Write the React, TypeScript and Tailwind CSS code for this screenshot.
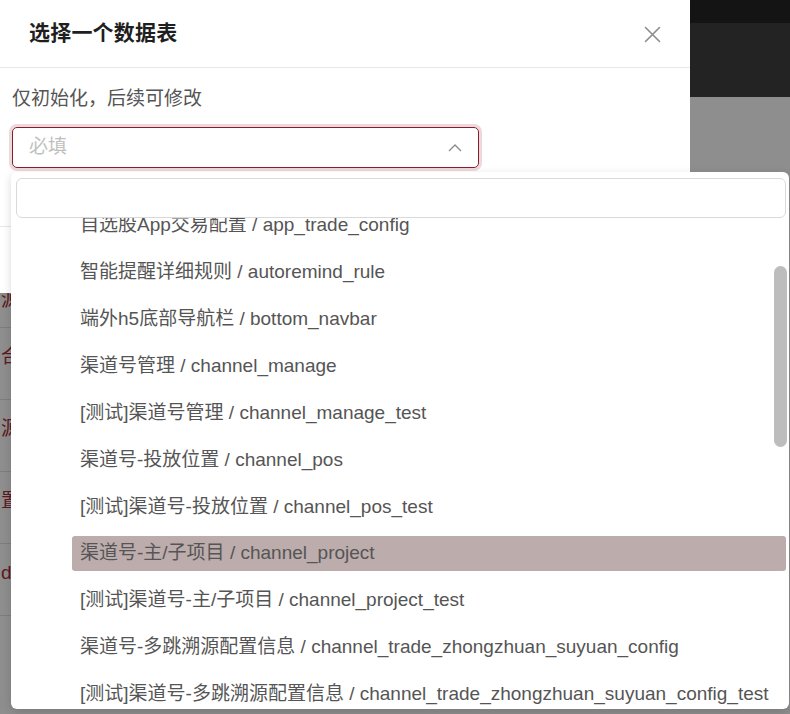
import React from "react";

const options = [
  "自选股App交易配置 / app_trade_config",
  "智能提醒详细规则 / autoremind_rule",
  "端外h5底部导航栏 / bottom_navbar",
  "渠道号管理 / channel_manage",
  "[测试]渠道号管理 / channel_manage_test",
  "渠道号-投放位置 / channel_pos",
  "[测试]渠道号-投放位置 / channel_pos_test",
  "渠道号-主/子项目 / channel_project",
  "[测试]渠道号-主/子项目 / channel_project_test",
  "渠道号-多跳溯源配置信息 / channel_trade_zhongzhuan_suyuan_config",
  "[测试]渠道号-多跳溯源配置信息 / channel_trade_zhongzhuan_suyuan_config_test",
  "渠道号-运营位 / channel_yunying",
];

const behindRows = ["合", "源", "置", "da"];

const App = () => {
  return (
    <div className="relative w-[790px] h-[714px] overflow-hidden bg-[#8e8e8e] font-['Liberation_Sans','Noto_Sans_CJK_SC',sans-serif]">
      <div className="flex h-full">
        {/* page behind the modal */}
        <div className="w-[690px] flex flex-col">
          <div className="h-[293px] bg-white shadow-[2px_0_10px_rgba(0,0,0,0.12)]">
            <div className="h-[68px] flex items-center justify-between pl-[29px] pr-[29px] border-b border-[#e8e8e8]">
              <h1 className="text-[21px] font-bold text-[#1f1f1f] tracking-[0.2px] -mt-[1px]">选择一个数据表</h1>
              <svg width="17" height="17" viewBox="0 0 17 17" className="mt-[1px]">
                <path d="M1.5 1.5 L15.5 15.5 M15.5 1.5 L1.5 15.5" stroke="#8c8c8c" strokeWidth="1.6" strokeLinecap="round" />
              </svg>
            </div>
            <div className="px-[12px] pt-[18px]">
              <p className="text-[19px] leading-[26px] text-[#555]">仅初始化，后续可修改</p>
              <div className="mt-[15px] w-[467px] h-[41px] rounded-[5px] border border-[#8a1c2c] ring-[3px] ring-[#ecd9dc] flex items-center justify-between pl-[16px] pr-[16px]">
                <span className="text-[19px] text-[#bfbfbf]">必填</span>
                <svg width="14" height="9" viewBox="0 0 14 9">
                  <polyline points="1,8 7,2 13,8" fill="none" stroke="#8c8c8c" strokeWidth="1.4" />
                </svg>
              </div>
            </div>
            <div className="mt-[58px] border-t border-[#e8e8e8]" />
          </div>
          <div className="h-[35px] border-b border-[#7d7d7d] text-[19px] text-[#5e1822] leading-[14px] pl-[1px] overflow-hidden">
            源
          </div>
          {behindRows.map((t) => (
            <div key={t} className="h-[72px] border-b border-[#7d7d7d] flex items-center pb-[12px] text-[19px] text-[#5e1822] pl-[1px]">
              {t}
            </div>
          ))}
        </div>
        <div className="flex-1 flex flex-col">
          <div className="h-[23px] bg-[#141414]" />
          <div className="h-[74px] bg-[#232323]" />
          <div className="flex-1 bg-[#8e8e8e]" />
        </div>
      </div>

      {/* dropdown popup */}
      <div className="absolute left-[11px] top-[172px] w-[778px] h-[537px] bg-white rounded-[6px] shadow-[0_3px_10px_rgba(0,0,0,0.15)] flex flex-col overflow-hidden">
        <div className="ml-[5px] mt-[6px] w-[770px] h-[40px] shrink-0 rounded-[6px] border border-[#d9d9d9]" />
        <div className="relative flex-1 overflow-hidden">
          <div className="-mt-[10px] pl-[61px] pr-[3px] flex flex-col gap-[11.9px]">
            {options.map((o, i) => (
              <div
                key={o}
                className={
                  "h-[35px] shrink-0 rounded-[3px] px-[8px] flex items-center text-[19px] text-[#555] whitespace-nowrap " +
                  (i === 7 ? "bg-[#bcacac]" : "")
                }
              >
                {o}
              </div>
            ))}
          </div>
          <div className="absolute right-[2px] top-[48px] w-[13px] h-[181px] rounded-full bg-[#bdbdbd]" />
        </div>
      </div>
    </div>
  );
};

export default App;
